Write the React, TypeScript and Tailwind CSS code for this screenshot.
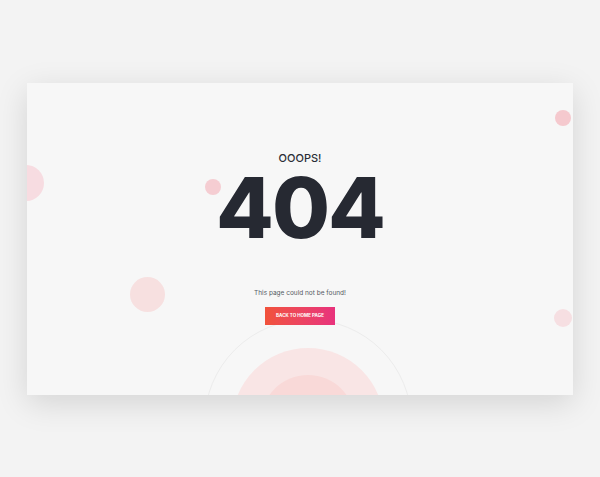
export default function App() {
  return (
    <div className="flex h-screen w-full items-center justify-center bg-[#f3f3f3] font-['Inter',sans-serif]">
      <div className="relative flex h-[312px] w-[546px] flex-col items-center overflow-hidden bg-[#f7f7f7] pt-[70px] shadow-[0_8px_30px_rgba(0,0,0,0.13)]">
        {/* decorative bubbles */}
        <div className="absolute left-[-19px] top-[82px] h-[36px] w-[36px] rounded-full bg-[#f7dce1]" />
        <div className="absolute left-[178px] top-[96px] h-[16px] w-[16px] rounded-full bg-[#f5cdd2]" />
        <div className="absolute left-[103px] top-[194px] h-[35px] w-[35px] rounded-full bg-[#f7e0e0] blur-[0.5px]" />
        <div className="absolute left-[528px] top-[27px] h-[16px] w-[16px] rounded-full bg-[#f5c9ce]" />
        <div className="absolute left-[527px] top-[226px] h-[18px] w-[18px] rounded-full bg-[#f6dfe2]" />
        {/* bottom concentric shapes */}
        <div className="absolute left-[177px] top-[236px] h-[208px] w-[208px] rounded-full border border-[#ececec]" />
        <div className="absolute left-[205px] top-[265px] h-[152px] w-[152px] rounded-full bg-[#f9e5e5]" />
        <div className="absolute left-[234px] top-[292px] h-[94px] w-[94px] rounded-full bg-[#f9d9d8]" />

        <div className="relative text-[11px] font-medium leading-none text-[#2b2e36]">OOOPS!</div>
        <div className="relative mt-[2px] text-[84px] font-extrabold leading-none tracking-[-2px] text-[#262932]">
          404
        </div>
        <p className="relative mt-[40px] text-[6.5px] leading-none text-[#555a62]">This page could not be found!</p>
        <button className="relative mt-[11px] flex h-[18px] w-[70px] items-center justify-center bg-gradient-to-r from-[#f1523a] to-[#e8327c] text-[4.5px] font-bold uppercase leading-none text-white">
          Back to home page
        </button>
      </div>
    </div>
  );
}
